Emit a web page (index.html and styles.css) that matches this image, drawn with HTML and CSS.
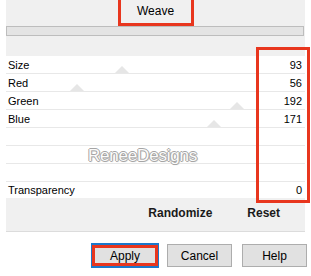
FILE: index.html
```html
<!DOCTYPE html>
<html lang="en">
<head>
<meta charset="UTF-8" />
<title>Weave</title>
<link rel="stylesheet" href="styles.css">
</head>
<body>

<div class="dialog">
  <div class="panel">
    <div class="header">
      <span class="preset">Weave</span>
    </div>
    <div class="track"></div>
    <div class="spacer"></div>

    <div class="rows">
      <div class="row"><span>Size</span><span>93</span><i class="thumb" style="left: 109px"></i></div>
      <div class="row"><span>Red</span><span>56</span><i class="thumb" style="left: 64px"></i></div>
      <div class="row"><span>Green</span><span>192</span><i class="thumb" style="left: 224px"></i></div>
      <div class="row"><span>Blue</span><span>171</span><i class="thumb" style="left: 201px"></i></div>
      <div class="row"></div>
      <div class="row"></div>
      <div class="row"></div>
      <div class="row last"><span>Transparency</span><span>0</span></div>
      <div class="watermark">ReneeDesigns</div>
    </div>

    <div class="actions">
      <span>Randomize</span>
      <span>Reset</span>
    </div>
  </div>

  <div class="buttons">
    <button type="button" class="apply">Apply</button>
    <button type="button">Cancel</button>
    <button type="button">Help</button>
  </div>

  <!-- annotation around the value column -->
  <div class="mark"></div>
</div>

</body>
</html>
```

FILE: styles.css
```css
* {
  box-sizing: border-box;
}

body {
  margin: 0;
  background: #fff;
  font-family: 'Liberation Sans', Arial, sans-serif;
  font-size: 11px;
  color: #000;
}

.dialog {
  position: relative;
  width: 311px;
  height: 276px;
}

/* Gray settings panel */
.panel {
  margin-left: 6px;
  width: 299px;
  background: #f0f0f0;
  border-bottom: 1px solid #dcdcdc;
  padding-bottom: 3px;
}

.header {
  height: 26px;
  display: flex;
  justify-content: center;
}

.preset {
  width: 76px;
  height: 26px;
  border: 3px solid #e8361e;
  border-top: 0;
  display: flex;
  align-items: center;
  justify-content: center;
  font-size: 12px;
  padding-bottom: 1px;
}

.track {
  height: 10px;
  margin: 0 1px 0 0;
  background: #e4e4e4;
  border: 1px solid #bdbdbd;
}

.spacer {
  height: 20px;
}

/* Parameter rows */
.rows {
  position: relative;
  background: #fff;
}

.row {
  position: relative;
  height: 18px;
  border-bottom: 1px solid #e8e8e8;
  display: flex;
  justify-content: space-between;
  align-items: center;
  padding: 0 3px 0 2px;
}

.row.last {
  height: 16px;
  border-bottom: 0;
}

.row span {
  position: relative;
  z-index: 1;
}

.thumb {
  position: absolute;
  bottom: 0;
  width: 0;
  height: 0;
  border-left: 7px solid transparent;
  border-right: 7px solid transparent;
  border-bottom: 7px solid #e6e6e6;
}

.watermark {
  position: absolute;
  left: 82px;
  top: 90px;
  font-size: 17px;
  letter-spacing: -0.2px;
  color: #fbfbfb;
  text-shadow: 1px 0 0 #a5a5a5, -1px 0 0 #a5a5a5, 0 1px 0 #a5a5a5, 0 -1px 0 #a5a5a5, 1px 1px 1px #c8c8c8;
}

/* Randomize / Reset */
.actions {
  height: 30px;
  display: flex;
  justify-content: flex-end;
  align-items: center;
  gap: 35px;
  padding-right: 25px;
  font-size: 12px;
  font-weight: bold;
  color: #1a1a1a;
}

/* Dialog buttons */
.buttons {
  display: flex;
  justify-content: flex-end;
  align-items: center;
  gap: 10px;
  padding-right: 4px;
  margin-top: 11px;
}

button {
  font-family: 'Liberation Sans', Arial, sans-serif;
  font-size: 12px;
  color: #000;
  background: #e1e1e1;
  border: 1px solid #adadad;
  width: 65px;
  height: 23px;
  padding: 0;
}

button.apply {
  position: relative;
  width: 68px;
  height: 25px;
  margin-right: -2px;
  border: 2px solid #1a78cc;
}

/* red annotation box inside Apply */
button.apply::after {
  content: '';
  position: absolute;
  top: 0;
  left: -1px;
  right: -1px;
  bottom: 0;
  border: 3px solid #e8361e;
}

.mark {
  position: absolute;
  left: 256px;
  top: 47px;
  width: 54px;
  height: 156px;
  border: 3px solid #e8361e;
}
```
